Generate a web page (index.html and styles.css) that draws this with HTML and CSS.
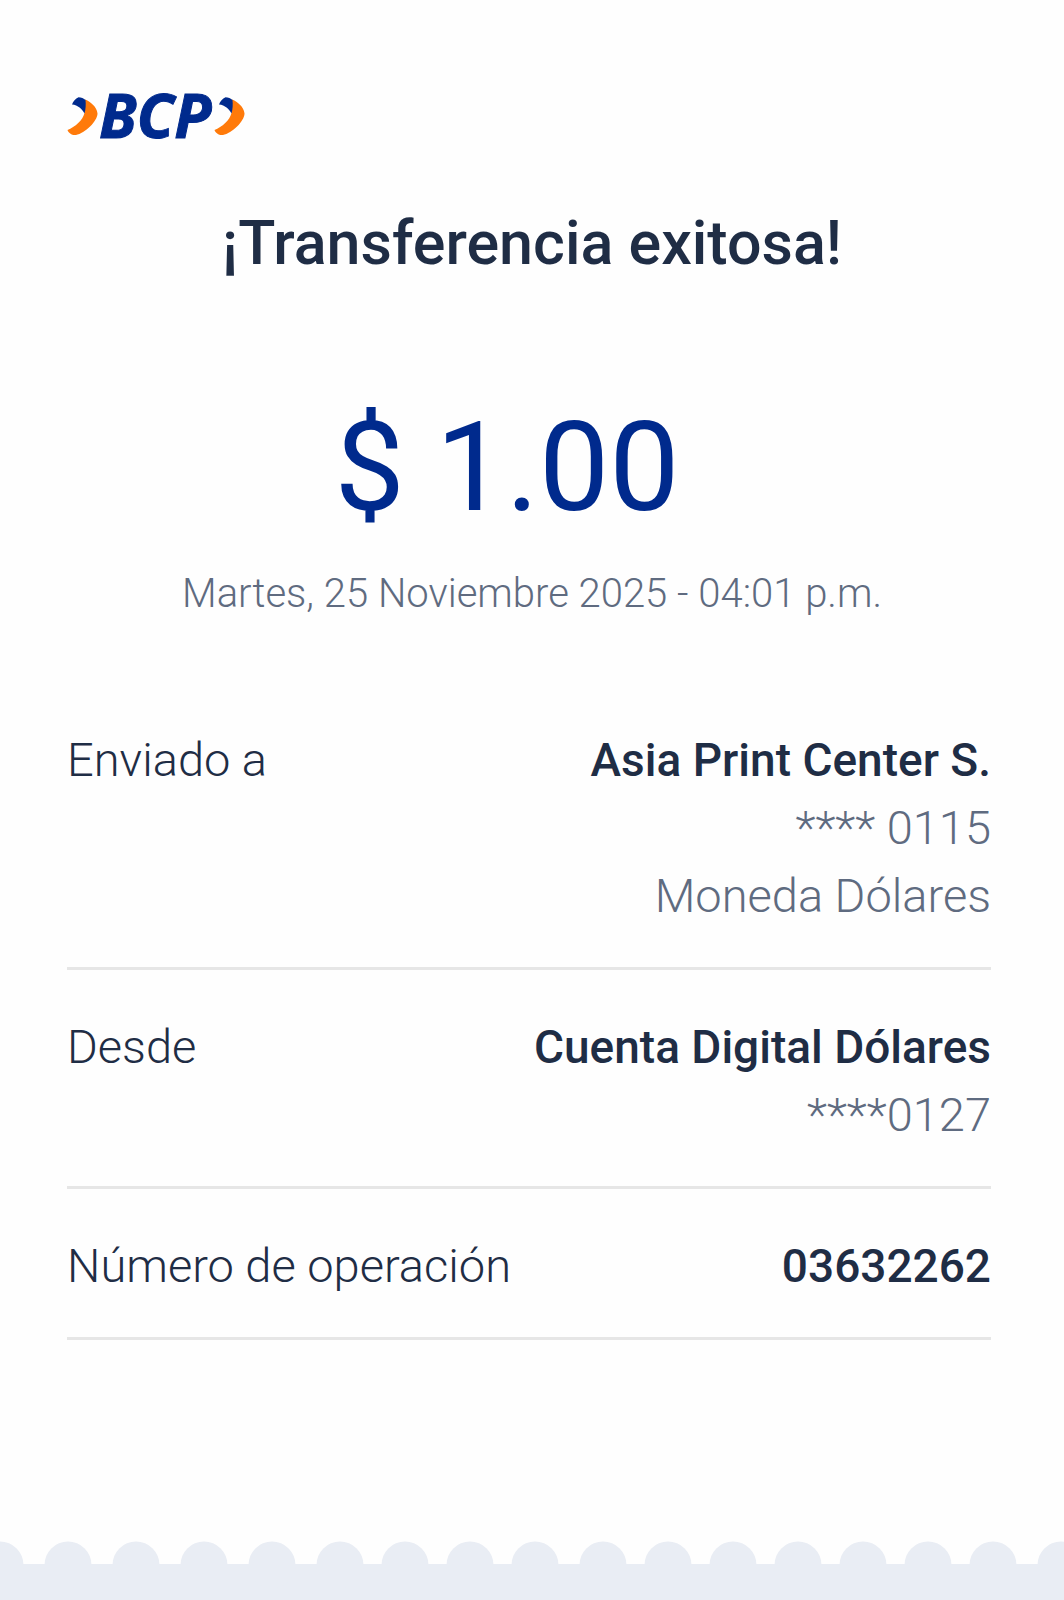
FILE: index.html
```html
<!DOCTYPE html>
<html lang="es">
<head>
  <meta charset="UTF-8">
  <meta name="viewport" content="width=device-width, initial-scale=1">
  <title>Transferencia exitosa</title>
  <link rel="stylesheet" href="styles.css">
</head>
<body>

  <main class="receipt">
    <svg class="logo" viewBox="0 0 180 48" role="img" aria-label="BCP">
      <defs>
        <g id="chevron">
          <path fill="#ff7a0a" d="M18 6.500C23 8 30 14 30.500 20.500C30.500 28 18 40.500 9 42C5 42.500 1.500 40 .5 37C8 34 16 27 17.500 20Z"/>
          <path fill="#002a8d" d="M5 11.500C6 8.500 8.500 5.500 11.500 4.300C14 4.300 17 5.500 18.500 7C19 12 18.700 16 17.500 20.500C15 16 11 12 5 11.500Z"/>
        </g>
      </defs>
      <use href="#chevron"/>
      <text class="logo-text" x="32" y="45">BCP</text>
      <use href="#chevron" x="147"/>
    </svg>

    <h1 class="title">¡Transferencia exitosa!</h1>
    <p class="amount">$ 1.00</p>
    <p class="date">Martes, 25 Noviembre 2025 - 04:01 p.m.</p>

    <dl class="details">
      <div class="row">
        <dt>Enviado a</dt>
        <dd>
          <strong>Asia Print Center S.</strong>
          <span>**** 0115</span>
          <span>Moneda Dólares</span>
        </dd>
      </div>
      <div class="row">
        <dt>Desde</dt>
        <dd>
          <strong>Cuenta Digital Dólares</strong>
          <span>****0127</span>
        </dd>
      </div>
      <div class="row">
        <dt>Número de operación</dt>
        <dd><strong>03632262</strong></dd>
      </div>
    </dl>
  </main>

  <!-- borde troquelado -->
  <svg class="edge" viewBox="0 0 1064 59" aria-hidden="true">
    <rect y="23" width="1064" height="36"/>
    <circle cx="0" cy="24" r="23.500"/>
    <circle cx="68" cy="24" r="23.500"/>
    <circle cx="136" cy="24" r="23.500"/>
    <circle cx="204" cy="24" r="23.500"/>
    <circle cx="272" cy="24" r="23.500"/>
    <circle cx="340" cy="24" r="23.500"/>
    <circle cx="405" cy="24" r="23.500"/>
    <circle cx="470" cy="24" r="23.500"/>
    <circle cx="535" cy="24" r="23.500"/>
    <circle cx="603" cy="24" r="23.500"/>
    <circle cx="668" cy="24" r="23.500"/>
    <circle cx="733" cy="24" r="23.500"/>
    <circle cx="798" cy="24" r="23.500"/>
    <circle cx="863" cy="24" r="23.500"/>
    <circle cx="928" cy="24" r="23.500"/>
    <circle cx="993" cy="24" r="23.500"/>
    <circle cx="1061" cy="24" r="23.500"/>
  </svg>

</body>
</html>
```

FILE: styles.css
```css
* { box-sizing: border-box; }
body { margin: 0; min-height: 100vh; display: flex; flex-direction: column; background: #fefefe; color: #1f2d45; font-family: Roboto, "Liberation Sans", sans-serif; }
.receipt { flex: 1; padding: 93px 67px 0; }
.logo { display: block; width: 180px; height: 48px; overflow: visible; }
.logo-text { font-family: "Noto Sans", "Open Sans", sans-serif; font-size: 61px; font-weight: 700; font-style: italic; fill: #002a8d; stroke: #002a8d; stroke-width: 1px; }
.title { margin: 62px 0 110px; font-size: 61px; line-height: 80px; font-weight: 500; text-align: center; }
.amount { margin: 0 0 25px; padding-right: 50px; font-size: 125px; line-height: 150px; font-weight: 400; text-align: center; color: #002a8d; }
.date { margin: 0; font-size: 40px; line-height: 52px; font-weight: 300; text-align: center; color: #5f6b80; }
.details { margin: 63px 6px 0 0; padding: 0; font-size: 47px; line-height: 68px; font-weight: 300; }
.row { display: flex; justify-content: space-between; padding: 0 0 37px; border-bottom: 3px solid #e6e6e6; }
.row + .row { padding-top: 43px; }
.row dd { display: flex; flex-direction: column; margin: 0; text-align: right; color: #5f6b80; }
.row strong { font-size: 46px; font-weight: 500; color: #1f2d45; }
.details { padding-top: 43px; }
.edge { display: block; width: 100%; fill: #e9edf4; }
```
